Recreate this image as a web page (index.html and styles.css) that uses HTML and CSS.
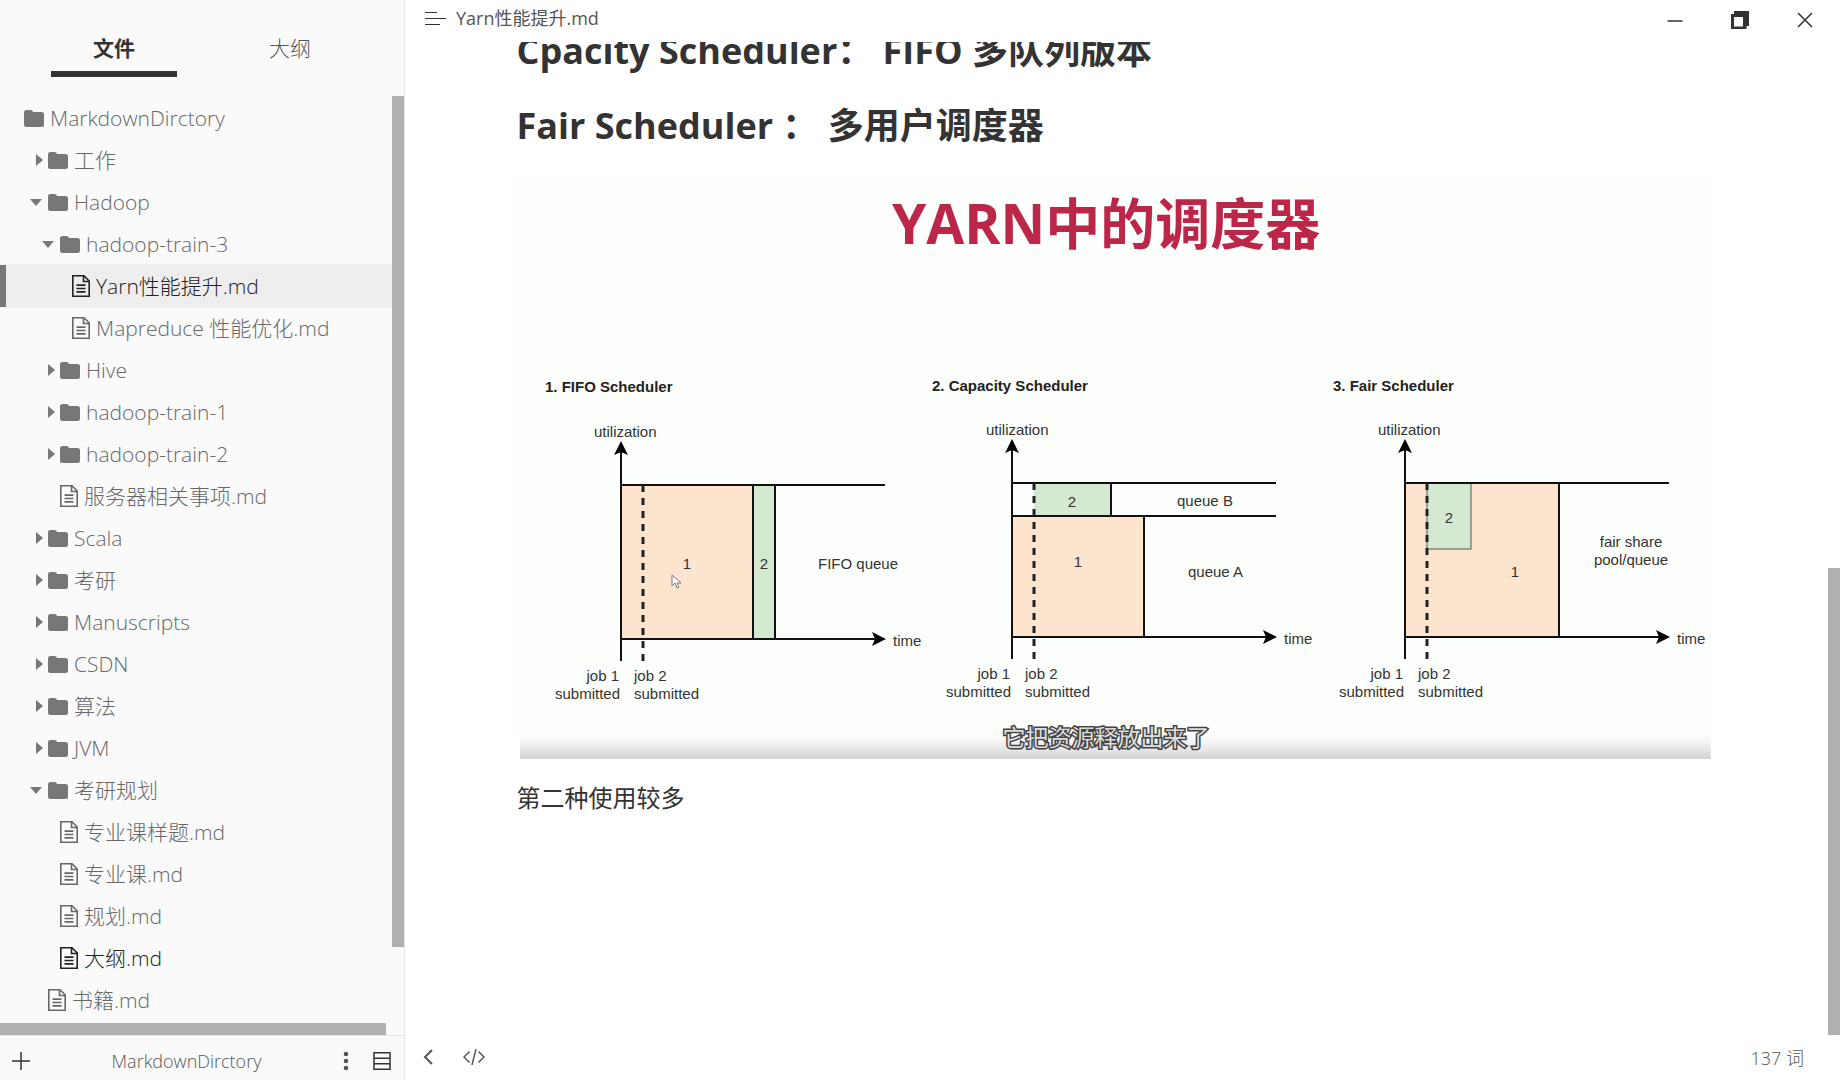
FILE: index.html
```html
<!DOCTYPE html>
<html lang="zh-CN">
<head>
<meta charset="utf-8">
<title>Yarn性能提升.md</title>
<link rel="stylesheet" href="styles.css">
</head>
<body>
<svg class="defs" aria-hidden="true">
  <symbol id="folder" viewBox="0 0 20 17"><path d="M0 2.5Q0 0 2.500 0H6.500Q8.500 0 9 2H17.500Q20 2 20 4.500V14.500Q20 17 17.500 17H2.500Q0 17 0 14.500Z"/></symbol>
  <symbol id="file" viewBox="0 0 18 22"><path fill="none" stroke="currentColor" stroke-width="1.6" d="M.8.8H12L17.200 6V21.200H.8ZM11.500.8V6.500H17"/><path fill="none" stroke="currentColor" stroke-width="1.7" d="M4.500 10.200H13.500M4.500 13.500H13.500M4.500 16.800H13.500"/></symbol>
  <symbol id="closed" viewBox="0 0 18 12"><path d="M6 0L13 6L6 12Z"/></symbol>
  <symbol id="open" viewBox="0 0 18 12"><path d="M0 3H12L6 10Z"/></symbol>
</svg>
<div class="app">
  <aside class="sidebar">
    <div class="tabs">
      <button class="tab tab-active">文件</button>
      <button class="tab">大纲</button>
    </div>
    <div class="tree-area">
      <ul class="tree">
        <li><button class="row level-0"><svg class="folder"><use href="#folder"/></svg>MarkdownDirctory</button></li>
        <li><button class="row level-1"><svg class="arrow"><use href="#closed"/></svg><svg class="folder"><use href="#folder"/></svg>工作</button></li>
        <li><button class="row level-1"><svg class="arrow"><use href="#open"/></svg><svg class="folder"><use href="#folder"/></svg>Hadoop</button></li>
        <li><button class="row level-2"><svg class="arrow"><use href="#open"/></svg><svg class="folder"><use href="#folder"/></svg>hadoop-train-3</button></li>
        <li><button class="row level-3 selected"><svg class="file"><use href="#file"/></svg>Yarn性能提升.md</button></li>
        <li><button class="row level-3"><svg class="file"><use href="#file"/></svg>Mapreduce 性能优化.md</button></li>
        <li><button class="row level-2"><svg class="arrow"><use href="#closed"/></svg><svg class="folder"><use href="#folder"/></svg>Hive</button></li>
        <li><button class="row level-2"><svg class="arrow"><use href="#closed"/></svg><svg class="folder"><use href="#folder"/></svg>hadoop-train-1</button></li>
        <li><button class="row level-2"><svg class="arrow"><use href="#closed"/></svg><svg class="folder"><use href="#folder"/></svg>hadoop-train-2</button></li>
        <li><button class="row level-2 leaf"><svg class="file"><use href="#file"/></svg>服务器相关事项.md</button></li>
        <li><button class="row level-1"><svg class="arrow"><use href="#closed"/></svg><svg class="folder"><use href="#folder"/></svg>Scala</button></li>
        <li><button class="row level-1"><svg class="arrow"><use href="#closed"/></svg><svg class="folder"><use href="#folder"/></svg>考研</button></li>
        <li><button class="row level-1"><svg class="arrow"><use href="#closed"/></svg><svg class="folder"><use href="#folder"/></svg>Manuscripts</button></li>
        <li><button class="row level-1"><svg class="arrow"><use href="#closed"/></svg><svg class="folder"><use href="#folder"/></svg>CSDN</button></li>
        <li><button class="row level-1"><svg class="arrow"><use href="#closed"/></svg><svg class="folder"><use href="#folder"/></svg>算法</button></li>
        <li><button class="row level-1"><svg class="arrow"><use href="#closed"/></svg><svg class="folder"><use href="#folder"/></svg>JVM</button></li>
        <li><button class="row level-1"><svg class="arrow"><use href="#open"/></svg><svg class="folder"><use href="#folder"/></svg>考研规划</button></li>
        <li><button class="row level-2 leaf"><svg class="file"><use href="#file"/></svg>专业课样题.md</button></li>
        <li><button class="row level-2 leaf"><svg class="file"><use href="#file"/></svg>专业课.md</button></li>
        <li><button class="row level-2 leaf"><svg class="file"><use href="#file"/></svg>规划.md</button></li>
        <li><button class="row level-2 leaf recent"><svg class="file"><use href="#file"/></svg>大纲.md</button></li>
        <li><button class="row level-1 leaf"><svg class="file"><use href="#file"/></svg>书籍.md</button></li>
      </ul>
      <div class="thumb thumb-tree-v"></div>
      <div class="thumb thumb-tree-h"></div>
    </div>
    <footer class="side-footer">
      <button class="icon-button" aria-label="新建"><svg width="18" height="18" viewBox="0 0 18 18"><path fill="none" stroke="#333" stroke-width="1.500" d="M9 0V18M0 9H18"/></svg></button>
      <span class="folder-name">MarkdownDirctory</span>
      <button class="icon-button" aria-label="更多"><svg width="6" height="20" viewBox="0 0 6 20"><g fill="#555"><circle cx="3" cy="3" r="2.300"/><circle cx="3" cy="10" r="2.300"/><circle cx="3" cy="17" r="2.300"/></g></svg></button>
      <button class="icon-button" aria-label="列表"><svg width="18" height="18" viewBox="0 0 18 18"><path fill="none" stroke="#333" stroke-width="1.500" d="M1 .8H17V17.200H1ZM1 6.300H17M1 11.700H17"/></svg></button>
    </footer>
  </aside>
  <main class="editor">
    <header class="titlebar">
      <button class="icon-button" aria-label="菜单"><svg width="22" height="14" viewBox="0 0 22 14"><path stroke="#333" d="M0 .5H12M0 6.500H21M0 12.500H15"/></svg></button>
      <span class="title">Yarn性能提升.md</span>
      <div class="window-buttons">
        <button class="icon-button" aria-label="最小化"><svg width="18" height="18" viewBox="0 0 18 18"><path stroke="#333" stroke-width="1.500" d="M1.500 10H16.500"/></svg></button>
        <button class="icon-button" aria-label="还原"><svg width="18" height="18" viewBox="0 0 18 18"><path fill="#333" fill-rule="evenodd" d="M3 0H18V15H15.500V18H0V3H3ZM3 6V15.500H12V6Z"/></svg></button>
        <button class="icon-button" aria-label="关闭"><svg width="18" height="18" viewBox="0 0 18 18"><path stroke="#333" stroke-width="1.500" d="M2 2L16 16M16 2L2 16"/></svg></button>
      </div>
    </header>
    <div class="page">
      <article class="document">
        <h2>Cpacity Scheduler： FIFO 多队列版本</h2>
        <h2>Fair Scheduler ： 多用户调度器</h2>
        <svg class="figure" viewBox="0 0 1191 583" role="img" aria-label="YARN中的调度器">
          <defs>
            <linearGradient id="shade" x1="0" y1="0" x2="0" y2="1"><stop offset="0" stop-color="#fdfffc"/><stop offset=".45" stop-color="#efefef"/><stop offset="1" stop-color="#d2d2d2"/></linearGradient>
            <g id="axes">
              <path class="line" d="M0 -188V22M0 0H254"/>
              <path d="M0 -198L7 -184L0 -187L-7 -184ZM265 0L251 -7L254 0L251 7Z"/>
            </g>
          </defs>
          <rect width="1191" height="583" fill="#fdfffc"/>
          <rect y="558" width="1191" height="25" fill="url(#shade)"/>
          <text class="fig-title" x="372" y="68">YARN中的调度器</text>
          <g transform="translate(101 463)">
            <rect class="job-one" y="-154" width="132" height="154"/>
            <rect class="job-two" x="132" y="-154" width="22" height="154"/>
            <path class="line" d="M0 -154H264M132 -154V0M154 -154V0"/>
            <path class="dash" d="M22 -154V22"/>
            <use href="#axes"/>
            <text class="name" x="-76" y="-247">1. FIFO Scheduler</text>
            <text x="-27" y="-202">utilization</text>
            <text class="mid" x="66" y="-70">1</text>
            <text class="mid" x="143" y="-70">2</text>
            <path class="cursor" d="M51 -64V-53L54 -56L56 -51L58 -52L56 -56H60Z"/>
            <text x="197" y="-70">FIFO queue</text>
            <text x="272" y="7">time</text>
            <text class="end" x="-2" y="42">job 1</text><text class="end" x="-1" y="60">submitted</text>
            <text x="13" y="42">job 2</text><text x="13" y="60">submitted</text>
          </g>
          <g transform="translate(492 461)">
            <rect class="job-one" y="-121" width="132" height="121"/>
            <rect class="job-two" x="22" y="-154" width="77" height="33"/>
            <path class="line" d="M0 -154H264M0 -121H264M99 -154V-121M132 -121V0"/>
            <path class="dash" d="M22 -154V22"/>
            <use href="#axes"/>
            <text class="name" x="-80" y="-246">2. Capacity Scheduler</text>
            <text x="-26" y="-202">utilization</text>
            <text class="mid" x="60" y="-130">2</text>
            <text class="mid" x="66" y="-70">1</text>
            <text x="165" y="-131">queue B</text>
            <text x="176" y="-60">queue A</text>
            <text x="272" y="7">time</text>
            <text class="end" x="-2" y="42">job 1</text><text class="end" x="-1" y="60">submitted</text>
            <text x="13" y="42">job 2</text><text x="13" y="60">submitted</text>
          </g>
          <g transform="translate(885 461)">
            <rect class="job-one" y="-154" width="154" height="154"/>
            <rect class="job-two outlined" x="22" y="-154" width="44" height="66"/>
            <path class="line" d="M0 -154H264M154 -154V0"/>
            <path class="dash" d="M22 -154V22"/>
            <use href="#axes"/>
            <text class="name" x="-72" y="-246">3. Fair Scheduler</text>
            <text x="-27" y="-202">utilization</text>
            <text class="mid" x="44" y="-114">2</text>
            <text class="mid" x="110" y="-60">1</text>
            <text class="mid" x="226" y="-90">fair share</text>
            <text class="mid" x="226" y="-72">pool/queue</text>
            <text x="272" y="7">time</text>
            <text class="end" x="-2" y="42">job 1</text><text class="end" x="-1" y="60">submitted</text>
            <text x="13" y="42">job 2</text><text x="13" y="60">submitted</text>
          </g>
          <text class="subtitle" x="586" y="570">它把资源释放出来了</text>
        </svg>
        <p>第二种使用较多</p>
      </article>
      <div class="thumb thumb-page"></div>
    </div>
    <footer class="statusbar">
      <button class="icon-button" aria-label="返回"><svg width="10" height="16" viewBox="0 0 10 16"><path fill="none" stroke="#555" stroke-width="2" d="M9 1L2 8L9 15"/></svg></button>
      <button class="icon-button" aria-label="源代码模式"><svg width="22" height="16" viewBox="0 0 22 16"><path fill="none" stroke="#555" stroke-width="1.500" d="M6.500 2.500L1 8L6.500 13.500M15.500 2.500L21 8L15.500 13.500M13 0L9 16"/></svg></button>
      <button class="word-count">137 词</button>
    </footer>
  </main>
</div>
</body>
</html>
```
FILE: styles.css
```css
* { box-sizing: border-box; }

body {
  margin: 0;
  color: #333;
  background: #fff;
  font-family: "Open Sans", "Noto Sans CJK SC", sans-serif;
}

button {
  margin: 0;
  padding: 0;
  border: 0;
  background: none;
  color: inherit;
  font: inherit;
}

svg { display: block; flex: none; }
.defs { position: absolute; width: 0; height: 0; }

.app {
  display: grid;
  grid-template-columns: 405px minmax(0, 1fr);
  height: 100vh;
}

.sidebar {
  display: flex;
  flex-direction: column;
  min-height: 0;
  border-right: 1px solid #e5e5e5;
  background: #fafafa;
  font-weight: 300;
}

.tabs {
  display: grid;
  grid-template-columns: 126px 126px;
  justify-content: space-between;
  flex: none;
  height: 96px;
  padding: 20px 51px 0;
}

.tab {
  height: 57px;
  padding-top: 2px;
  border-bottom: 6px solid transparent;
  color: #555;
  font-size: 21px;
}

.tab-active {
  border-color: #333;
  color: #333;
  font-weight: 700;
}

.tree-area {
  position: relative;
  flex: 1;
  min-height: 0;
  overflow: hidden;
}

.tree { margin: 0; padding: 1px 0 0; list-style: none; }

.row {
  display: flex;
  align-items: center;
  width: 100%;
  height: 42px;
  color: #686868;
  font-size: 21px;
  line-height: 42px;
  white-space: nowrap;
}

.level-0 { padding-left: 24px; }
.level-1 { padding-left: 30px; }
.level-2 { padding-left: 42px; }
.level-3 { padding-left: 72px; }
.level-1.leaf { padding-left: 48px; }
.level-2.leaf { padding-left: 60px; }

.arrow { width: 18px; height: 12px; fill: #777; }
.folder { width: 20px; height: 17px; margin-right: 6px; fill: #777; }
.file { width: 18px; height: 22px; margin-right: 6px; }

.selected {
  background: #eee;
  box-shadow: inset 6px 0 #777, 0 1px #eee, 0 -1px #eee;
}

.selected, .recent { color: #222; }

.thumb { position: absolute; background: #b0b0b0; }
.thumb-tree-v { top: 0; right: 0; bottom: 88px; width: 12px; }
.thumb-tree-h { left: 0; right: 18px; bottom: 0; height: 12px; }
.thumb-page { right: 0; bottom: 0; width: 12px; height: 47%; }

.side-footer {
  display: flex;
  align-items: center;
  gap: 24px;
  flex: none;
  height: 45px;
  padding: 6px 13px 0 12px;
  border-top: 1px solid #e5e5e5;
}

.folder-name {
  flex: 1;
  color: #555;
  font-size: 18px;
  line-height: 24px;
  text-align: center;
}

.editor {
  display: flex;
  flex-direction: column;
  min-width: 0;
  min-height: 0;
}

.titlebar {
  display: flex;
  align-items: center;
  gap: 9px;
  flex: none;
  height: 42px;
  padding: 0 26px 4px 20px;
}

.title {
  flex: 1;
  padding-bottom: 2px;
  color: #555;
  font-size: 18px;
  line-height: 24px;
}

.window-buttons { display: flex; gap: 47px; padding-top: 2px; }

.page {
  position: relative;
  flex: 1;
  min-height: 0;
  padding-right: 12px;
  overflow: hidden;
}

.document {
  width: 85%;
  max-width: 1200px;
  margin: -13px auto 0;
}

h2 {
  margin: 0 0 31px;
  font-size: 36px;
  font-weight: 700;
  line-height: 44px;
}

.document p {
  margin: 20px 0;
  font-size: 24px;
  line-height: 38px;
}

.figure {
  width: 100%;
  max-width: 1191px;
  height: auto;
  margin: -3px 3px 0;
  font-family: "Liberation Sans", Arial, sans-serif;
  font-size: 15px;
}

.figure text { fill: #333; }
.figure .name { font-weight: 700; fill: #222; }
.figure .mid { text-anchor: middle; }
.figure .end { text-anchor: end; }
.figure .fig-title {
  fill: #bb2649;
  font-family: "Open Sans", "Noto Sans CJK SC", sans-serif;
  font-size: 55px;
  font-weight: 700;
}
.figure .subtitle {
  fill: #ddd;
  stroke: #444;
  stroke-width: 3px;
  paint-order: stroke;
  text-anchor: middle;
  font-family: "Noto Sans CJK SC", sans-serif;
  font-size: 23px;
}

.line { fill: none; stroke: #111; stroke-width: 2px; }
.dash { fill: none; stroke: #222; stroke-width: 3px; stroke-dasharray: 7 6; }
.job-one { fill: #fce4cf; }
.job-two { fill: #d3e9d2; }
.outlined { stroke: #555; stroke-width: 1px; }
.cursor { fill: #fff; stroke: #777; stroke-width: 1px; }

.statusbar {
  display: flex;
  align-items: center;
  gap: 30px;
  flex: none;
  height: 45px;
  padding: 0 36px 2px 18px;
}

.word-count {
  margin-left: auto;
  color: #555;
  font-size: 18px;
  font-weight: 300;
}
```
